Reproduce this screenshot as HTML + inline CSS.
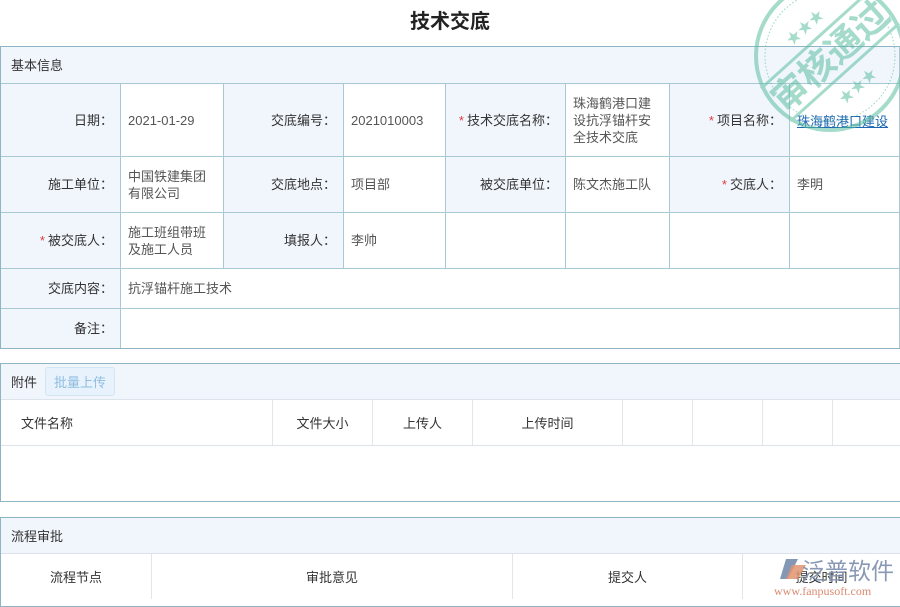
<!DOCTYPE html>
<html><head><meta charset="utf-8"><style>
*{margin:0;padding:0;box-sizing:border-box}
body{width:900px;height:600px;overflow:hidden;background:#fff;font-family:"Liberation Sans","Noto Sans CJK SC",sans-serif;font-size:13px;color:#333;position:relative}
.title{position:absolute;top:5px;left:0;width:900px;text-align:center;font-size:20px;font-weight:bold;color:#222}
.abs{position:absolute}
.c{position:absolute;border-right:1px solid #a8c8d6;border-bottom:1px solid #a8c8d6;display:flex;align-items:center;padding:0 7px;line-height:17px}
.l{background:#f1f6fd;justify-content:flex-end}
.v{background:#fff;color:#555}
.r{color:#e03b3b;margin-right:3px}
.g{position:absolute;border-right:1px solid #e2e6ea;display:flex;align-items:center;justify-content:center;height:45px}
</style></head><body>
<div class="title">技术交底</div>
<div class="abs" style="left:0;top:46px;width:901px;height:303px;border:1px solid #8fb4c6;background:#f1f6fd"></div>
<div class="c" style="left:1px;top:47px;width:899px;height:37px;background:#f1f6fd;padding-left:10px">基本信息</div>
<div class="c l" style="left:1px;top:84px;width:120px;height:73px">日期：</div>
<div class="c v" style="left:121px;top:84px;width:103px;height:73px">2021-01-29</div>
<div class="c l" style="left:224px;top:84px;width:120px;height:73px">交底编号：</div>
<div class="c v" style="left:344px;top:84px;width:102px;height:73px">2021010003</div>
<div class="c l" style="left:446px;top:84px;width:120px;height:73px"><span class="r">*</span>技术交底名称：</div>
<div class="c v" style="left:566px;top:84px;width:104px;height:73px">珠海鹤港口建设抗浮锚杆安全技术交底</div>
<div class="c l" style="left:670px;top:84px;width:120px;height:73px"><span class="r">*</span>项目名称：</div>
<div class="c v" style="left:790px;top:84px;width:110px;height:73px;align-items:flex-start;padding-top:29px;color:#1a66b0;text-decoration:underline;white-space:nowrap">珠海鹤港口建设</div>
<div class="c l" style="left:1px;top:157px;width:120px;height:56px">施工单位：</div>
<div class="c v" style="left:121px;top:157px;width:103px;height:56px">中国铁建集团有限公司</div>
<div class="c l" style="left:224px;top:157px;width:120px;height:56px">交底地点：</div>
<div class="c v" style="left:344px;top:157px;width:102px;height:56px">项目部</div>
<div class="c l" style="left:446px;top:157px;width:120px;height:56px">被交底单位：</div>
<div class="c v" style="left:566px;top:157px;width:104px;height:56px">陈文杰施工队</div>
<div class="c l" style="left:670px;top:157px;width:120px;height:56px"><span class="r">*</span>交底人：</div>
<div class="c v" style="left:790px;top:157px;width:110px;height:56px">李明</div>
<div class="c l" style="left:1px;top:213px;width:120px;height:56px"><span class="r">*</span>被交底人：</div>
<div class="c v" style="left:121px;top:213px;width:103px;height:56px">施工班组带班及施工人员</div>
<div class="c l" style="left:224px;top:213px;width:120px;height:56px">填报人：</div>
<div class="c v" style="left:344px;top:213px;width:102px;height:56px">李帅</div>
<div class="c v" style="left:446px;top:213px;width:120px;height:56px"></div>
<div class="c v" style="left:566px;top:213px;width:104px;height:56px"></div>
<div class="c v" style="left:670px;top:213px;width:120px;height:56px"></div>
<div class="c v" style="left:790px;top:213px;width:110px;height:56px"></div>
<div class="c l" style="left:1px;top:269px;width:120px;height:40px">交底内容：</div>
<div class="c v" style="left:121px;top:269px;width:779px;height:40px">抗浮锚杆施工技术</div>
<div class="c l" style="left:1px;top:309px;width:120px;height:39px;border-bottom:none">备注：</div>
<div class="c v" style="left:121px;top:309px;width:779px;height:39px;border-bottom:none"></div>

<div class="abs" style="left:0;top:363px;width:901px;height:139px;border:1px solid #8fb4c6;background:#fff"></div>
<div class="abs" style="left:1px;top:364px;width:899px;height:36px;background:#f1f6fd;border-bottom:1px solid #dde3ea;display:flex;align-items:center;padding-left:10px">附件<span style="margin-left:8px;border:1px solid #d3e4f2;background:#e8f2fc;color:#8fbde0;border-radius:3px;padding:4px 8px">批量上传</span></div>
<div class="abs" style="left:1px;top:400px;width:899px;height:46px;border-bottom:1px solid #dde3ea"></div>
<div class="g" style="left:1px;top:400px;width:272px;justify-content:flex-start;padding-left:20px">文件名称</div>
<div class="g" style="left:273px;top:400px;width:100px">文件大小</div>
<div class="g" style="left:373px;top:400px;width:100px">上传人</div>
<div class="g" style="left:473px;top:400px;width:150px">上传时间</div>
<div class="g" style="left:623px;top:400px;width:70px"></div>
<div class="g" style="left:693px;top:400px;width:70px"></div>
<div class="g" style="left:763px;top:400px;width:70px"></div>

<div class="abs" style="left:0;top:517px;width:901px;height:90px;border:1px solid #8fb4c6;background:#fff"></div>
<div class="abs" style="left:1px;top:518px;width:899px;height:36px;background:#f1f6fd;border-bottom:1px solid #dde3ea;display:flex;align-items:center;padding-left:10px">流程审批</div>
<div class="g" style="left:1px;top:554px;width:151px">流程节点</div>
<div class="g" style="left:152px;top:554px;width:361px">审批意见</div>
<div class="g" style="left:513px;top:554px;width:230px">提交人</div>
<div class="g" style="left:743px;top:554px;width:157px;border:none">提交时间</div>

<svg class="abs" style="left:770px;top:553px" width="128" height="47">
<path d="M16 6 L28 6 L18 26 L10 26 Z" fill="#6f86a8" opacity=".85"/>
<path d="M22 12 L36 12 L28 26 L16 26 Z" fill="#e09470" opacity=".85"/>
<text x="32" y="26" font-size="23" fill="#7d8fae" opacity=".9" font-family="Noto Sans CJK SC,sans-serif">泛普软件</text>
<text x="4" y="42" font-size="12" fill="#d88a70" font-family="Liberation Serif,serif">www.fanpusoft.com</text>
</svg>

<svg class="abs" style="left:748px;top:-24px" width="164" height="164" opacity=".55">
<g transform="translate(82,80)" fill="none" stroke="#5cbea0">
<circle r="74" stroke-width="4"/>
<circle r="65" stroke-width="1.2" stroke-dasharray="1.5 2"/>
<g transform="rotate(-42)">
<line x1="-73" y1="-22" x2="73" y2="-22" stroke-width="3"/>
<line x1="-73" y1="22" x2="73" y2="22" stroke-width="3"/>
<text x="0" y="13" text-anchor="middle" font-size="36" font-weight="bold" fill="#5cbea0" stroke="none" font-family="Noto Sans CJK SC,sans-serif">审核通过</text>
<text x="-22" y="-33" font-size="15" fill="#5cbea0" stroke="none">★★★</text>
<text x="-22" y="46" font-size="15" fill="#5cbea0" stroke="none">★★★</text>
</g></g>
</svg>
</body></html>
